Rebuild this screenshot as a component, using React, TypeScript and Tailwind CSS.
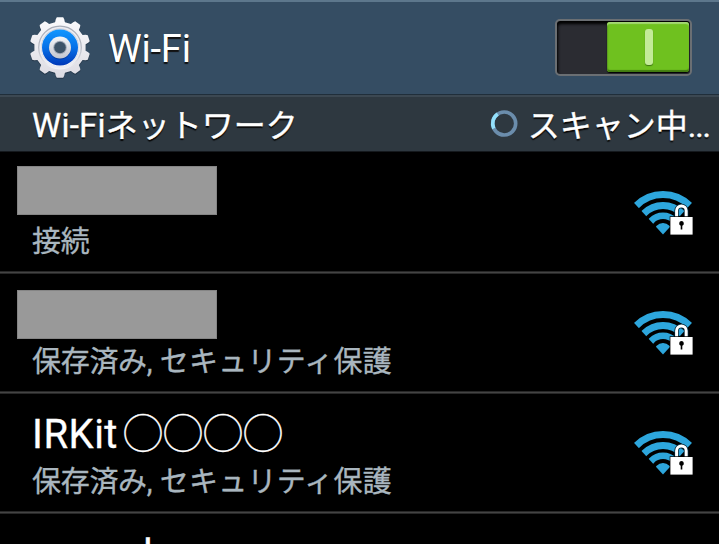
import React from 'react';

const FONT = "font-['Roboto','Noto_Sans_CJK_JP',sans-serif]";

function gearPath(cx: number, cy: number, outer: number, root: number): string {
  const parts: string[] = [];
  const profile: [number, number][] = [
    [-11, root], [-8.5, outer - 1.8], [-6, outer], [6, outer], [8.5, outer - 1.8], [11, root],
  ];
  for (let i = 0; i < 10; i++) {
    for (const [offset, r] of profile) {
      const a = ((i * 36 + offset) * Math.PI) / 180;
      parts.push(`${(cx + r * Math.sin(a)).toFixed(2)} ${(cy - r * Math.cos(a)).toFixed(2)}`);
    }
  }
  return `M${parts.join('L')}Z`;
}

function GearIcon() {
  return (
    <svg className="block h-[66px] w-[66px] shrink-0" viewBox="0 0 66 66">
      <defs>
        <linearGradient id="metal" x1="0" y1="0" x2="0" y2="1">
          <stop offset="0" stopColor="#fbfbfd" />
          <stop offset="1" stopColor="#dcdbe2" />
        </linearGradient>
        <linearGradient id="groove" x1="0" y1="0" x2="0" y2="1">
          <stop offset="0" stopColor="#a8adb8" />
          <stop offset="0.5" stopColor="#b4b7c1" />
          <stop offset="1" stopColor="#f4f4f8" />
        </linearGradient>
        <linearGradient id="blue" x1="0" y1="0" x2="0" y2="1">
          <stop offset="0" stopColor="#1297ff" />
          <stop offset="0.5" stopColor="#0671e8" />
          <stop offset="1" stopColor="#0038b8" />
        </linearGradient>
        <linearGradient id="hub" x1="0" y1="0" x2="0" y2="1">
          <stop offset="0" stopColor="#f4f5f8" />
          <stop offset="1" stopColor="#c3c6d0" />
        </linearGradient>
      </defs>
      <path d={gearPath(33, 34.5, 30.6, 26)} fill="#1b2a3a" opacity="0.5" />
      <path d={gearPath(33, 33.5, 30.4, 25.8)} fill="url(#metal)" />
      <circle cx="33" cy="33.5" r="21.3" fill="#ededf2" stroke="url(#groove)" strokeWidth="1.2" />
      <circle cx="33" cy="33.5" r="19" fill="#c3c7d1" />
      <circle cx="33" cy="34" r="18.6" fill="#f5f5fa" />
      <circle cx="33" cy="33.5" r="18" fill="url(#blue)" />
      <circle cx="33" cy="34.5" r="11" fill="#062f88" opacity="0.6" />
      <circle cx="33" cy="33.5" r="11" fill="url(#hub)" />
      <circle cx="33" cy="33.5" r="6.8" fill="#a3aab8" />
      <circle cx="33" cy="33.5" r="5.8" fill="#3d5368" />
    </svg>
  );
}

function Toggle() {
  return (
    <div className="flex h-[57px] w-[137px] shrink-0 justify-end rounded-[5px] border-2 border-[#6b6f73] bg-[#2b2c32] pt-[1px] pr-[1px] pb-[2px] shadow-[inset_1px_3px_3px_#000]">
      <div className="flex h-[50px] w-[82px] items-center justify-center rounded-[3px] bg-[#6fc11f] shadow-[inset_0_2px_1px_#a3d873,inset_0_-2px_1px_#427b10,inset_1px_0_1px_#57991b,0_1px_1px_#000]">
        <div className="ml-[2px] h-[36px] w-2 rounded-[3px] bg-[#c3eb98] shadow-[0_1px_1px_#3d7410]" />
      </div>
    </div>
  );
}

function Spinner() {
  return (
    <svg className="block h-7 w-7 shrink-0" viewBox="0 0 28 28" fill="none" strokeWidth="3.6">
      <circle cx="14.2" cy="13.5" r="11.5" stroke="#6b8dac" />
      <path d="M7.7 4A11.5 11.5 0 0 0 3.8 18.5" stroke="#93e0fb" />
    </svg>
  );
}

function SecuredWifiIcon({ id }: { id: string }) {
  return (
    <svg className="block h-[46px] w-[60px] shrink-0" viewBox="0 0 60 46">
      <clipPath id={id}>
        <path d="M30 44.5L-4 7.5V0H64V7.5Z" />
      </clipPath>
      <g clipPath={`url(#${id})`} fill="none" stroke="#2da6dc">
        <circle cx="30" cy="42" r="37.5" strokeWidth="7.2" />
        <circle cx="30" cy="42" r="26.6" strokeWidth="7" />
        <circle cx="30" cy="42" r="16.2" strokeWidth="6.6" />
        <circle cx="30" cy="42" r="4.5" strokeWidth="9" />
      </g>
      <path d="M43.6 28V20.8a4.8 4.8 0 0 1 9.6 0V28" fill="none" stroke="#06293a" strokeWidth="4.6" />
      <path d="M43.6 28V20.8a4.8 4.8 0 0 1 9.6 0V28" fill="none" stroke="#fff" strokeWidth="3" />
      <rect x="36.7" y="26.3" width="23" height="19" fill="#000" />
      <rect x="37.4" y="27" width="22.2" height="17.6" fill="#fff" />
      <path d="M48.5 31a2.5 2.5 0 0 1 .8 4.8V39.5h-1.6v-3.7a2.5 2.5 0 0 1 .8-4.8Z" fill="#000" />
    </svg>
  );
}

function NetworkRow({ id, title, status }: { id: string; title: React.ReactNode; status: React.ReactNode }) {
  return (
    <div className="flex h-[120px] shrink-0 justify-between border-b border-[#444] pr-[26px] shadow-[0_1px_0_#272727,inset_0_-1px_0_#272727]">
      <div className="flex flex-col">
        {title}
        <div className="mt-[1px] ml-8 flex h-[34px] items-center text-[29px] leading-[34px] whitespace-pre text-[#a9b6bf] [-webkit-text-stroke:0.35px_#a9b6bf]">{status}</div>
      </div>
      <div className="pt-[37px]">
        <SecuredWifiIcon id={id} />
      </div>
    </div>
  );
}

const Saved = () => (
  <>
    <span className="tracking-[-0.3px]">保存済み</span>
    <span>, </span>
    <span className="tracking-[0.25px]">セキュリティ保護</span>
  </>
);

export default function App() {
  return (
    <div className={`flex h-[544px] w-[719px] flex-col overflow-hidden bg-black text-white ${FONT}`}>
      <header className="flex h-[95px] shrink-0 items-start justify-between border-t-2 border-b border-t-[#5d778c] border-b-[#202e3a] bg-[#354d63] pr-[27px] pl-[27px]">
        <div className="flex items-center pt-[12px]">
          <GearIcon />
          <h1 className="mt-[4px] ml-[15px] text-[38px] leading-[46px] tracking-[-0.2px] [text-shadow:0_2px_1px_#111]">Wi-Fi</h1>
        </div>
        <div className="pt-[17px]">
          <Toggle />
        </div>
      </header>
      <section className="flex h-[57px] shrink-0 items-center justify-between border-t-2 border-b border-t-[#3c4852] border-b-[#15191d] bg-[#2e3840] pr-[9px] pl-8 text-[32px] leading-[40px] [text-shadow:0_2px_1px_#080808] [-webkit-text-stroke:0.35px_#fff]">
        <h2 className="flex items-center pt-[3px]">
          <span className="text-[33px] tracking-[0.2px]">Wi-Fi</span>
          <span>ネットワーク</span>
        </h2>
        <div className="flex items-center">
          <Spinner />
          <span className="ml-2.5 pt-[3px]">スキャン中</span>
          <span className="pt-[3px] tracking-[-1px]">...</span>
        </div>
      </section>
      <main className="flex flex-col pt-[1px]">
        <NetworkRow
          id="wifi-a"
          title={<div className="mt-[13px] mb-[9px] ml-[17px] h-[49px] w-[200px] border border-[#858585] bg-[#999]" />}
          status={<span className="tracking-[-0.3px]">接続</span>}
        />
        <NetworkRow
          id="wifi-b"
          title={<div className="mt-[17px] mb-[5px] ml-[17px] h-[49px] w-[200px] border border-[#858585] bg-[#999]" />}
          status={<Saved />}
        />
        <NetworkRow
          id="wifi-c"
          title={
            <div className="mt-[18px] ml-8 flex h-[53px] items-start text-[40px] leading-[48px] [-webkit-text-stroke:0.3px_#fff]">
              <span className="tracking-[0.5px]">IRKit</span>
              <span className="ml-[5px]">◯◯◯◯</span>
            </div>
          }
          status={<Saved />}
        />
        <div className="mt-[18px] ml-[143px] text-[40px] leading-[48px] [-webkit-text-stroke:0.3px_#fff]">l</div>
      </main>
    </div>
  );
}
